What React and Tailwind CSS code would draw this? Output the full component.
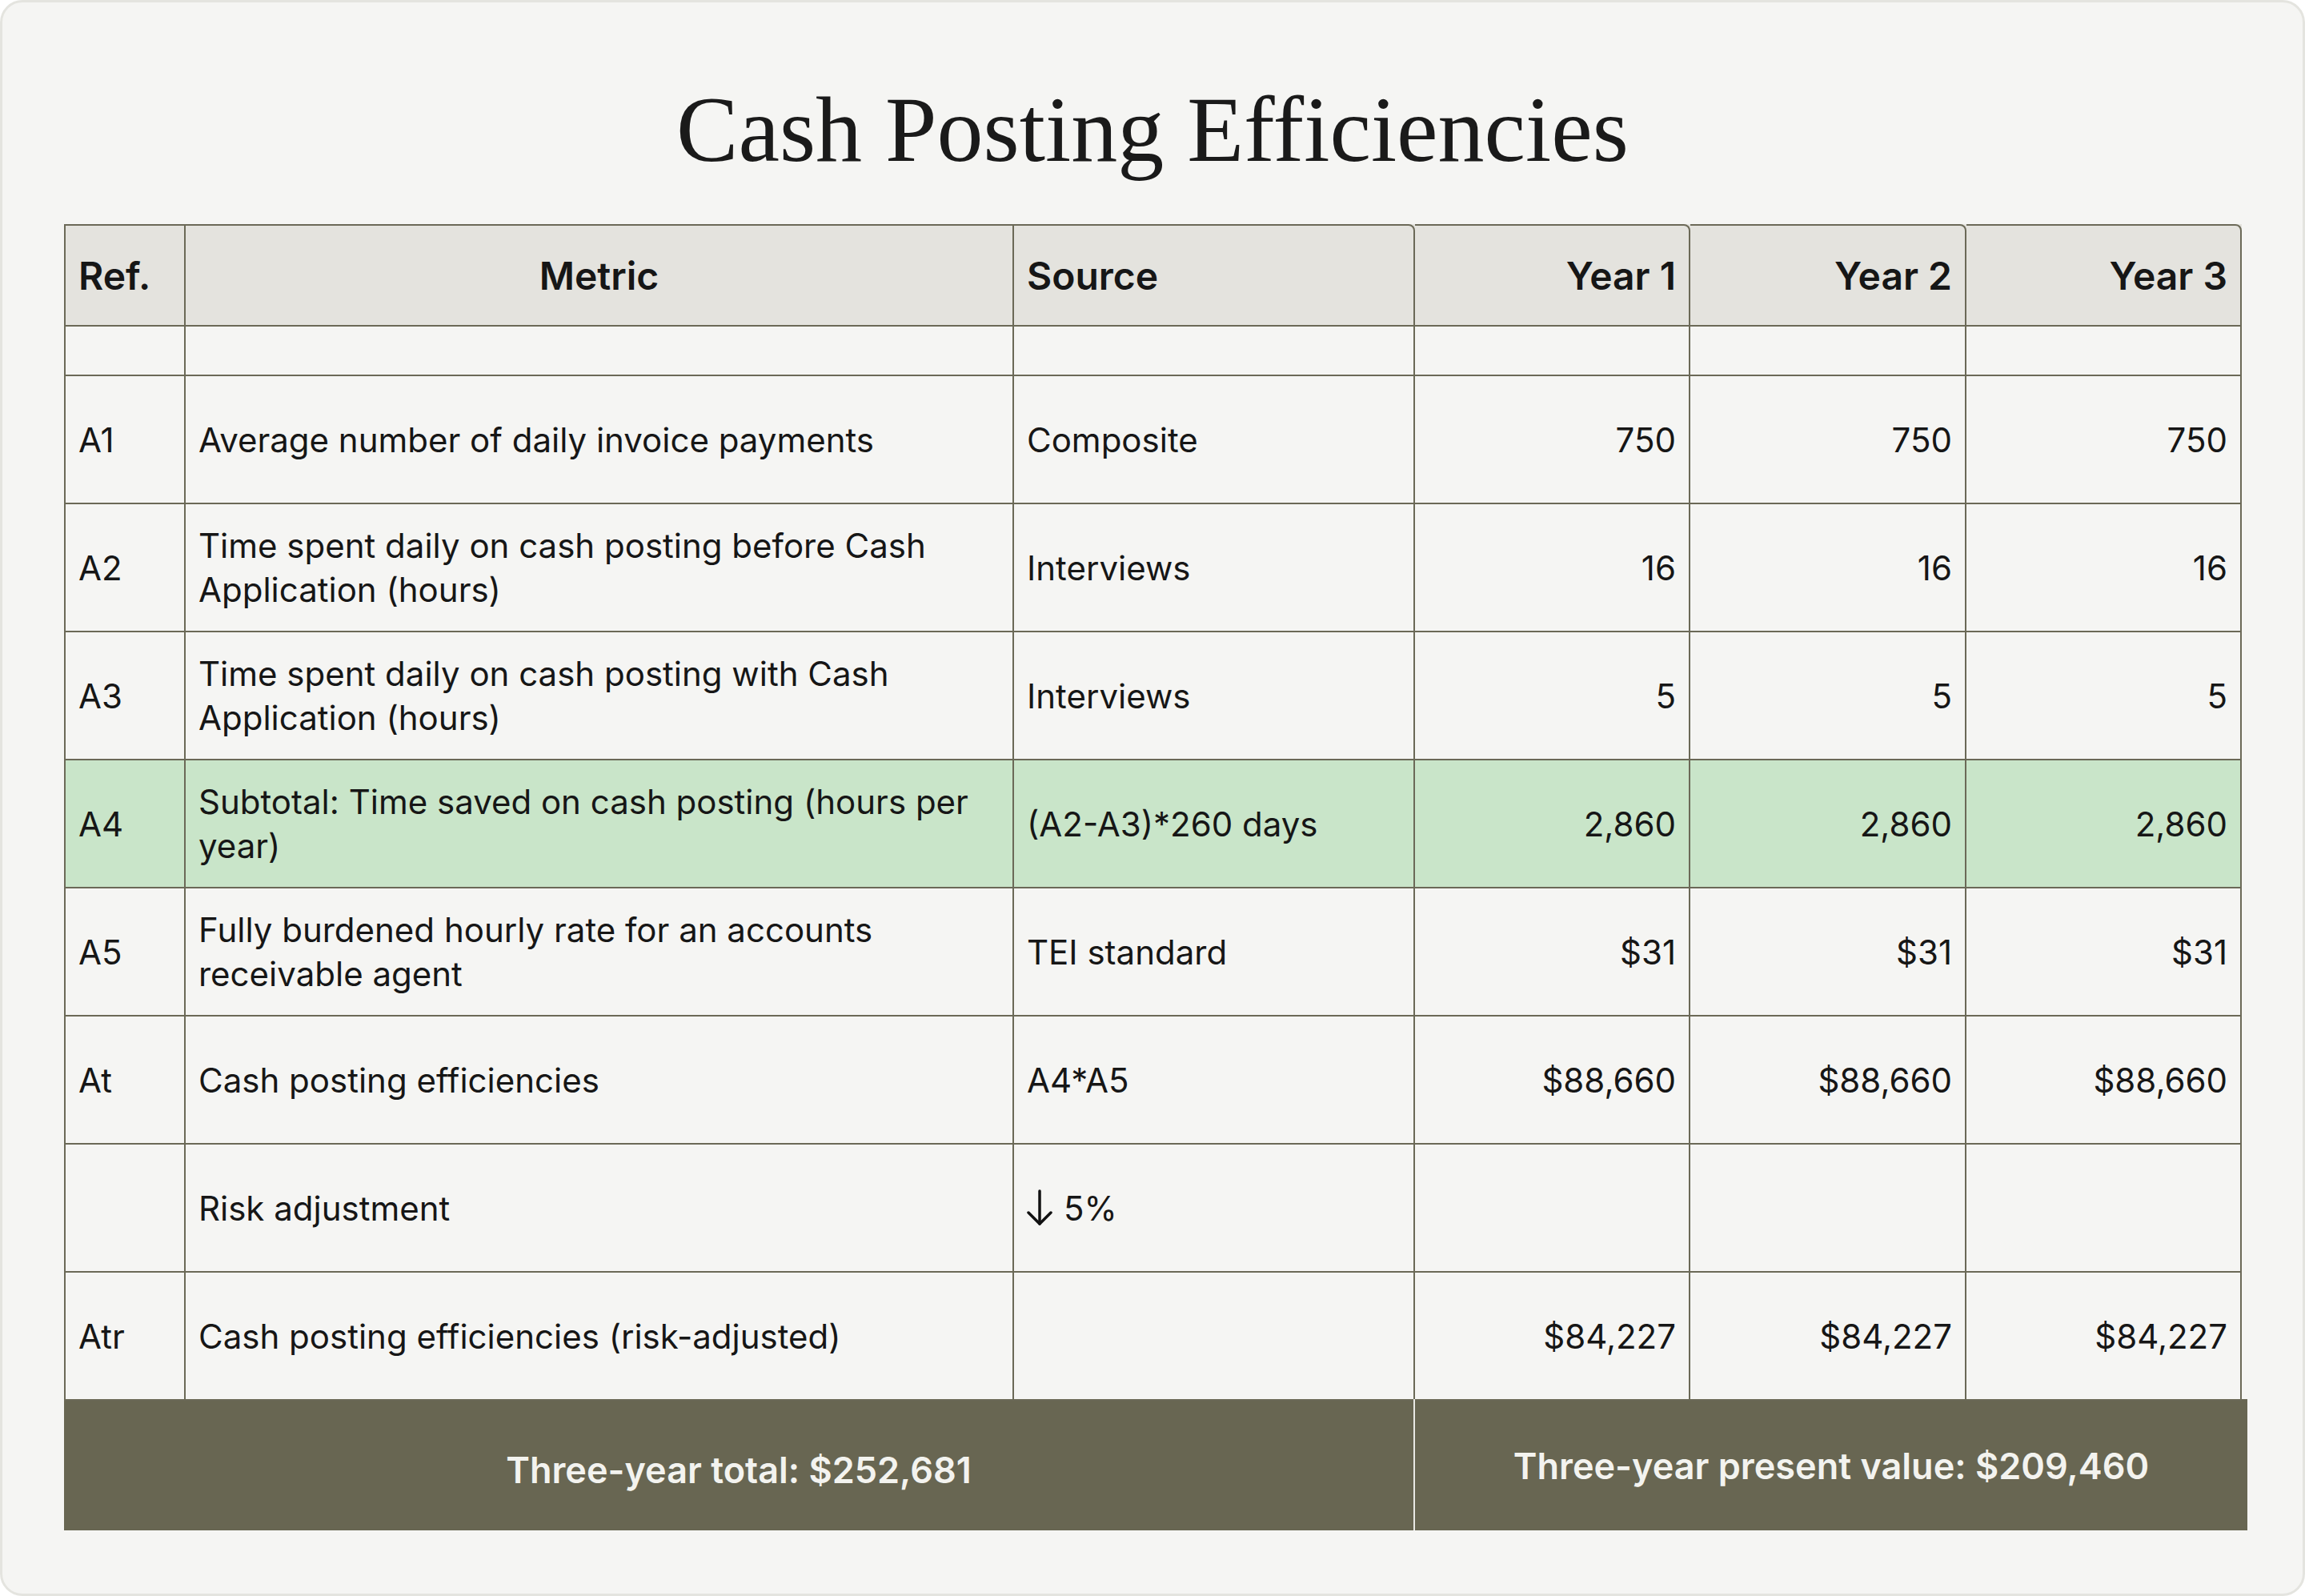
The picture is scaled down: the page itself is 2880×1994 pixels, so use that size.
import React from "react";

const rows = [
  { ref: "A1", metric: "Average number of daily invoice payments", source: "Composite", vals: ["750", "750", "750"] },
  { ref: "A2", metric: "Time spent daily on cash posting before Cash Application (hours)", source: "Interviews", vals: ["16", "16", "16"] },
  { ref: "A3", metric: "Time spent daily on cash posting with Cash Application (hours)", source: "Interviews", vals: ["5", "5", "5"] },
  { ref: "A4", metric: "Subtotal: Time saved on cash posting (hours per year)", source: "(A2-A3)*260 days", vals: ["2,860", "2,860", "2,860"], green: true },
  { ref: "A5", metric: "Fully burdened hourly rate for an accounts receivable agent", source: "TEI standard", vals: ["$31", "$31", "$31"] },
  { ref: "At", metric: "Cash posting efficiencies", source: "A4*A5", vals: ["$88,660", "$88,660", "$88,660"] },
  { ref: "", metric: "Risk adjustment", source: "risk", vals: ["", "", ""] },
  { ref: "Atr", metric: "Cash posting efficiencies (risk-adjusted)", source: "", vals: ["$84,227", "$84,227", "$84,227"] },
];

const grid = "grid w-[2721px] grid-cols-[152px_1035px_501px_344px_345px_344px]";
const cell = "flex items-center px-4 border-r-2 border-b-2 border-[#6b6957]";
const head = "flex items-center px-4 border-t-2 border-r-2 border-b-2 border-[#6b6957]";

const DownArrow = () => (
  <svg viewBox="0 0 32 46" className="w-[32px] h-[46px] mr-[14px]" fill="none" stroke="#111" strokeWidth="3.5" strokeLinecap="round" strokeLinejoin="round">
    <path d="M16 2 V43" />
    <path d="M2 29 L16 43 L30 29" />
  </svg>
);

const Row = ({ r }) => {
  const bg = r.green ? "bg-[#c9e5c9]" : "";
  return (
    <div className={`${grid} h-[160px] ${bg}`}>
      <div className={`${cell} border-l-2`}>{r.ref}</div>
      <div className={cell}>{r.metric}</div>
      <div className={cell}>
        {r.source === "risk" ? (
          <>
            <DownArrow />
            <span>5%</span>
          </>
        ) : (
          r.source
        )}
      </div>
      {r.vals.map((v, i) => (
        <div key={i} className={`${cell} justify-end text-right`}>
          {v}
        </div>
      ))}
    </div>
  );
};

const App = () => {
  return (
    <div className="w-[2880px] h-[1994px] bg-white">
      <div className="w-full h-full bg-[#f5f5f3] border-[3px] border-[#e4e4df] rounded-[28px] flex flex-col">
        <h1 className="mt-[90px] text-center text-[116px] leading-[138px] text-[#1a1a1a] font-['Liberation_Serif',serif]">
          Cash Posting Efficiencies
        </h1>
        <div className="ml-[77px] mt-[49px] w-[2728px] font-['Inter',sans-serif] text-[42px] leading-[55px] text-[#161616]">
          <div className={`${grid} h-[128px] bg-[#e4e3de] text-[48px] font-semibold`}>
            <div className={`${head} border-l-2`}>Ref.</div>
            <div className={`${head} justify-center`}>Metric</div>
            <div className={`${head} rounded-tr-[8px]`}>Source</div>
            <div className={`${head} justify-end rounded-tr-[8px]`}>Year 1</div>
            <div className={`${head} justify-end rounded-tr-[8px]`}>Year 2</div>
            <div className={`${head} justify-end rounded-tr-[8px]`}>Year 3</div>
          </div>
          <div className={`${grid} h-[62px]`}>
            <div className={`${cell} border-l-2`} />
            <div className={cell} />
            <div className={cell} />
            <div className={cell} />
            <div className={cell} />
            <div className={cell} />
          </div>
          {rows.map((r, i) => (
            <Row key={i} r={r} />
          ))}
          <div className="grid w-[2728px] grid-cols-[1686px_1042px] h-[164px] -mt-[2px] bg-[#686652] text-[45px] font-semibold text-[#f3f3ef]">
            <div className="flex items-center justify-center pt-[12px]">Three-year total: $252,681</div>
            <div className="flex items-center justify-center pt-[2px] border-l-2 border-[#e8e8e4]">Three-year present value: $209,460</div>
          </div>
        </div>
      </div>
    </div>
  );
};

export default App;
